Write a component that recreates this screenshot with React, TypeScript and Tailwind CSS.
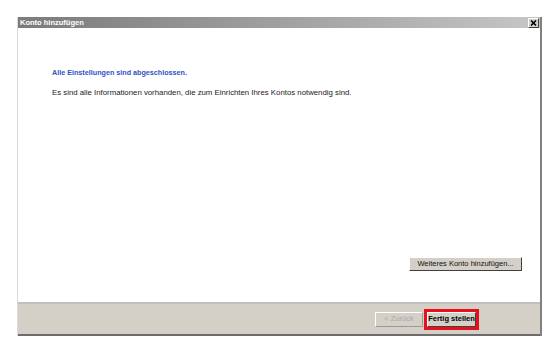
export default function App() {
    return (
        <div className="w-[560px] h-[353px] bg-white pt-[17px] pl-[17px]" style={{ fontFamily: '"Liberation Sans", Arial, sans-serif' }}>
            <div className="w-[525px] flex flex-col border-l border-l-[#dcdcdc] border-r-2 border-r-[#808080]">
                {/* title bar */}
                <div className="h-[11px] flex items-center justify-between bg-gradient-to-r from-[#7b7b7b] to-[#c6c6c6] pl-[2px] pr-[1px]">
                    <span className="text-[7.5px] leading-none font-bold text-white">Konto hinzufügen</span>
                    <div className="w-[11px] h-[10px] bg-[#d4d0c8] border border-t-white border-l-white border-r-[#404040] border-b-[#404040] flex items-center justify-center">
                        <svg width="7" height="6" viewBox="0 0 7 6">
                            <path d="M1 0.5 L6 5.5 M6 0.5 L1 5.5" stroke="#000" strokeWidth="1.6" />
                        </svg>
                    </div>
                </div>
                {/* body */}
                <div className="h-[274px] bg-white flex flex-col pl-[34px] pr-[18px] pt-[40px] pb-[31px]">
                    <p className="text-[7.2px] leading-[9px] font-bold text-[#2f52c6] whitespace-nowrap">Alle Einstellungen sind abgeschlossen.</p>
                    <p className="mt-[11px] text-[7.8px] leading-[9px] text-[#222] whitespace-nowrap">Es sind alle Informationen vorhanden, die zum Einrichten Ihres Kontos notwendig sind.</p>
                    <div className="mt-auto flex justify-end">
                        <button className="w-[113px] h-[14px] bg-[#d4d0c8] border border-t-white border-l-white border-r-[#404040] border-b-[#404040] text-[7.5px] leading-none text-[#111] whitespace-nowrap">
                            Weiteres Konto hinzufügen...
                        </button>
                    </div>
                </div>
                {/* footer */}
                <div className="h-[34px] bg-[#d4d0c8] border-t-2 border-t-[#c0c0c0] border-b-2 border-b-[#6c6c6c] flex items-center justify-end pr-[61px] gap-[1px]">
                    <button className="w-[48px] h-[15px] bg-[#d4d0c8] border border-t-white border-l-white border-r-[#9a9a9a] border-b-[#9a9a9a] text-[7.5px] leading-none text-[#a8a8a8] whitespace-nowrap">
                        &lt; Zurück
                    </button>
                    <div className="w-[55px] h-[21px] border-[3px] border-[#e8101a] flex">
                        <button className="flex-1 bg-[#d4d0c8] border border-t-white border-l-white border-r-[#404040] border-b-[#404040] text-[7.5px] leading-none font-bold text-black whitespace-nowrap">
                            Fertig stellen
                        </button>
                    </div>
                </div>
            </div>
        </div>
    );
}
